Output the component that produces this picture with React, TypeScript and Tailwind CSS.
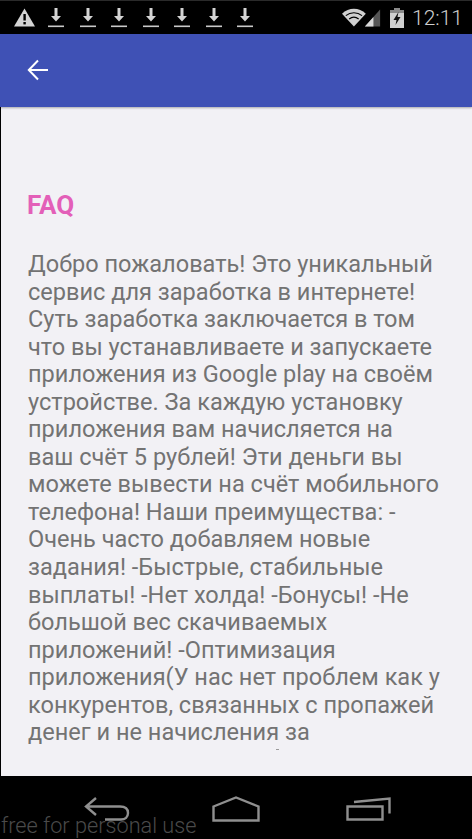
const lines = [
  "Добро пожаловать! Это уникальный",
  "сервис для заработка в интернете!",
  "Суть заработка заключается в том",
  "что вы устанавливаете и запускаете",
  "приложения из Google play на своём",
  "устройстве. За каждую установку",
  "приложения вам начисляется на",
  "ваш счёт 5 рублей! Эти деньги вы",
  "можете вывести на счёт мобильного",
  "телефона! Наши преимущества: -",
  "Очень часто добавляем новые",
  "задания! -Быстрые, стабильные",
  "выплаты! -Нет холда! -Бонусы! -Не",
  "большой вес скачиваемых",
  "приложений! -Оптимизация",
  "приложения(У нас нет проблем как у",
  "конкурентов, связанных с пропажей",
  "денег и не начисления за",
];

function DownloadIcon() {
  return (
    <svg width="16" height="22" viewBox="0 0 16 22" className="shrink-0">
      <path d="M6.5 1h3v8h3.5L8 14.5 3 9h3.5z" fill="#d4d4d4" />
      <rect x="0" y="18.5" width="16" height="1.6" fill="#c8c8c8" />
    </svg>
  );
}

export default function App() {
  return (
    <div className="relative flex flex-col w-[472px] h-[839px] overflow-hidden bg-black" style={{ fontFamily: "Roboto, sans-serif" }}>
      <div className="flex items-center justify-between h-[34px] pl-[14px] pr-[9px] bg-black border-t border-[#2a2a2a]">
        <div className="flex items-center gap-[15.5px]">
          <svg width="21" height="19" viewBox="0 0 21 19" className="shrink-0 -mr-[2.5px]">
            <path d="M10.5 0.5 21 18.5H0z" fill="#d4d4d4" />
            <rect x="9.4" y="6" width="2.4" height="6.5" fill="#000" />
            <rect x="9.4" y="14" width="2.4" height="2.4" fill="#000" />
          </svg>
          <DownloadIcon />
          <DownloadIcon />
          <DownloadIcon />
          <DownloadIcon />
          <DownloadIcon />
          <DownloadIcon />
          <DownloadIcon />
        </div>
        <div className="flex items-center">
          <svg width="40" height="20" viewBox="0 0 42 20" className="shrink-0">
            <path d="M0 5.5C7-1.5 18-1.5 25 5.5L12.5 19z" fill="#d0d0d0" />
            <path d="M4 7.5C9 3.5 16 3.5 21 7.5" stroke="#000" strokeWidth="1.2" fill="none" />
            <path d="M7.5 11C10.5 8.8 14.5 8.8 17.5 11" stroke="#000" strokeWidth="1.2" fill="none" />
            <path d="M24 19 40 1v18z" fill="#555" />
            <path d="M24 19l9-10v10z" fill="#d8d8d8" />
          </svg>
          <svg width="14" height="20" viewBox="0 0 14 20" className="shrink-0 ml-[8px]">
            <rect x="0" y="2" width="14" height="18" fill="#d0d0d0" />
            <rect x="4" y="0" width="6" height="2" fill="#8a8a8a" />
            <rect x="0" y="2" width="14" height="3" fill="#8a8a8a" />
            <path d="M8.5 4 3.5 12h3l-1 5 5-8h-3z" fill="#111" />
          </svg>
          <span className="ml-[8px] text-[21px] leading-[26px] font-light text-[#cfcfcf]">12:11</span>
        </div>
      </div>

      <div className="flex items-center h-[73px] pl-[27px] bg-[#3f51b5] shadow-[0_1px_2px_rgba(0,0,0,0.3)] z-10">
        <svg width="22" height="22" viewBox="0 0 22 22" className="shrink-0 -mt-[1px]">
          <path d="M21 11H2M11 1.5 1.8 11l9.2 9.5" stroke="#fff" strokeWidth="2" fill="none" />
        </svg>
      </div>

      <div className="relative flex-1 ml-[1px] pl-[27px] pt-[82px] bg-[#f2f1f5] overflow-hidden">
        <h1 className="-ml-[1px] text-[26px] leading-[32px] font-bold text-[#e35fb8]">FAQ</h1>
        <div className="mt-[30px] text-[23.55px] leading-[27.55px] text-[#737373] whitespace-nowrap">
          {lines.map((line) => (
            <div key={line}>{line}</div>
          ))}
        </div>
        <div className="absolute left-[275px] top-[642px] w-[3px] h-[1px] bg-[#9a9a9a]" />
      </div>

      <div className="relative flex items-start h-[63px] bg-black shrink-0">
        <svg width="46" height="26" viewBox="0 0 46 26" className="absolute left-[84px] top-[21px]">
          <path d="M12 1 2 9.5 12 18M2 9.5H36C43 9.5 44 13 44 16C44 20 41 22.5 37 22.5H21" stroke="#8f8f8f" strokeWidth="2.4" fill="none" />
        </svg>
        <svg width="48" height="26" viewBox="0 0 48 26" className="absolute left-[212px] top-[20px]">
          <path d="M1.5 10.5 24 1.5l22.5 9v14h-45z" stroke="#8f8f8f" strokeWidth="2.4" fill="none" />
        </svg>
        <svg width="46" height="26" viewBox="0 0 46 26" className="absolute left-[346px] top-[21px]">
          <path d="M1.5 9.5h35v13h-35z" stroke="#8f8f8f" strokeWidth="2.4" fill="none" />
          <path d="M8 5 43.5 1.5v15" stroke="#8f8f8f" strokeWidth="2.4" fill="none" />
        </svg>
        <span className="absolute left-[1px] top-[36px] text-[21.7px] leading-[27px] font-light text-[#4a4a4a]">free for personal use</span>
      </div>
    </div>
  );
}
